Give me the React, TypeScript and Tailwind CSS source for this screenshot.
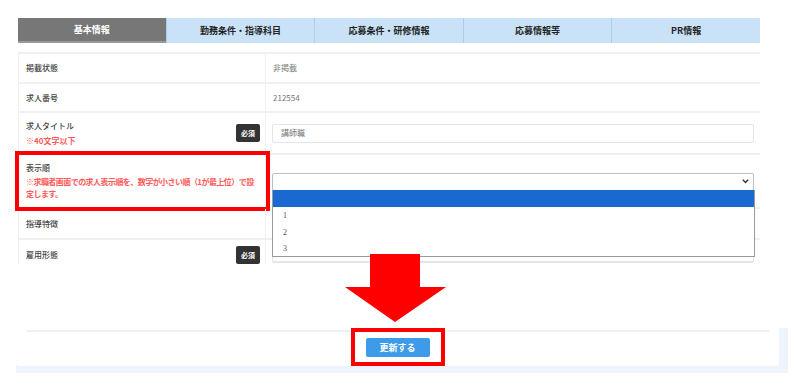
import React from 'react';

const tabs = ['基本情報', '勤務条件・指導科目', '応募条件・研修情報', '応募情報等', 'PR情報'];

const Badge = () => (
  <span className="flex h-[18px] w-[24px] items-center justify-center rounded-[2px] bg-[#333] text-[7px] font-bold text-white">
    必須
  </span>
);

const Chevron = () => (
  <svg width="7" height="5" viewBox="0 0 7 5" className="shrink-0">
    <path d="M0.8 0.8 L3.5 3.6 L6.2 0.8" fill="none" stroke="#333" strokeWidth="1.4" />
  </svg>
);

const App = () => {
  return (
    <div
      className="relative h-[387px] w-[794px] overflow-hidden bg-white text-[8px] text-[#444]"
      style={{ fontFamily: '"Noto Sans CJK JP", "Noto Sans", sans-serif' }}
    >
      <div className="pl-[18px] pt-[18px]">
        {/* tabs */}
        <div className="flex h-[25px] w-[742px]">
          {tabs.map((t, i) => (
            <div
              key={t}
              className={`flex flex-1 items-center justify-center text-[9px] font-bold ${
                i === 0
                  ? 'border-b-2 border-[#999] bg-[#777] text-white'
                  : 'border-l border-[#a8cff0] bg-[#c9e2f8] text-[#222]'
              }`}
            >
              {t}
            </div>
          ))}
        </div>

        {/* table */}
        <div className="relative mt-[9px] w-[742px] border-l border-t-2 border-[#eef0f2]">
          <div className="grid h-[30px] grid-cols-[247px_1fr] border-b-2 border-[#eef0f2]">
            <div className="flex items-center border-r border-[#eef0f2] px-[7px] font-medium">掲載状態</div>
            <div className="flex items-center pl-[7px] text-[#777]">非掲載</div>
          </div>
          <div className="grid h-[29px] grid-cols-[247px_1fr] border-b-2 border-[#eef0f2]">
            <div className="flex items-center border-r border-[#eef0f2] px-[7px] font-medium">求人番号</div>
            <div className="flex items-center pl-[7px] text-[#777]">212554</div>
          </div>
          <div className="grid h-[42px] grid-cols-[247px_1fr] border-b-2 border-[#eef0f2]">
            <div className="flex items-center justify-between border-r border-[#eef0f2] pl-[7px] pr-[5px]">
              <div className="flex flex-col leading-[15px]">
                <span className="font-medium">求人タイトル</span>
                <span className="font-bold text-[#ff5a5a]">※40文字以下</span>
              </div>
              <Badge />
            </div>
            <div className="flex items-center pl-[6px] pr-[6px]">
              <div className="flex h-[19px] w-full items-center rounded-[2px] border border-[#e2e5e9] pl-[8px] text-[#777]">
                講師職
              </div>
            </div>
          </div>
          <div className="grid h-[54px] grid-cols-[247px_1fr] border-b-2 border-[#eef0f2]">
            <div className="flex flex-col justify-center overflow-visible border-r border-[#eef0f2] pl-[7px] pr-0 leading-[12px] outline-[4px] outline-[#ff0000] outline-solid">
              <span className="mb-[2px] font-medium">表示順</span>
              <span className="whitespace-nowrap font-bold tracking-[-0.55px] text-[#ff5a5a]">
                ※求職者画面での求人表示順を、数字が小さい順（1が最上位）で設
              </span>
              <span className="whitespace-nowrap font-bold tracking-[-0.55px] text-[#ff5a5a]">定します。</span>
            </div>
            <div className="flex items-center pl-[6px] pr-[6px] pt-[1px]">
              <div className="flex h-[18px] w-full items-center justify-end rounded-[2px] border border-[#b8c0ca] pr-[4px]">
                <Chevron />
              </div>
            </div>
          </div>
          <div className="grid h-[31px] grid-cols-[247px_1fr] border-b-2 border-[#eef0f2]">
            <div className="flex items-center border-r border-[#eef0f2] px-[7px] font-medium">指導特徴</div>
            <div />
          </div>
          <div className="grid h-[23px] grid-cols-[247px_1fr]">
            <div className="flex items-start justify-between border-r border-[#eef0f2] pl-[7px] pr-[5px] pt-[6px]">
              <span className="mt-[3px] font-medium">雇用形態</span>
              <Badge />
            </div>
            <div className="pl-[6px] pr-[6px] pt-[4px]">
              <div className="h-[19px] w-full rounded-[2px] border border-[#e2e5e9] border-b-2" />
            </div>
          </div>

          {/* open dropdown list */}
          <div
            className="absolute left-[253px] top-[136px] w-[483px] border border-t-0 border-[#999] bg-white text-[8px] text-[#555]"
            style={{ fontFamily: '"Liberation Serif", serif' }}
          >
            <div className="h-[17px] bg-[#1a69d0]" />
            <div className="flex h-[17px] items-center pl-[10px] pt-[1px]">1</div>
            <div className="flex h-[16px] items-center pl-[10px] pt-[2px]">2</div>
            <div className="flex h-[16px] items-center pl-[10px] pt-[2px]">3</div>
          </div>
        </div>
      </div>

      {/* arrow */}
      <div className="flex h-[65px] justify-center pr-[2px]">
        <svg width="102" height="68" viewBox="0 0 102 68" className="relative z-10 -mt-[9px] shrink-0">
          <polygon points="25,0 75,0 75,33 101,33 50,68 0,33 25,33" fill="#ff0000" />
        </svg>
      </div>

      {/* bottom card */}
      <div className="ml-[16px] w-[772px] bg-[#edf4fc] pb-[7px] pr-[9px]">
        <div className="flex flex-col items-center rounded-b-[3px] bg-white">
          <div className="mt-[2px] h-[2px] w-[742px] bg-[#eef0f2]" />
          <div className="-mt-[4px] border-4 border-[#ff0000] px-[11px] pb-[5px] pt-[6px]">
            <button className="flex h-[19px] w-[64px] items-center justify-center rounded-[2px] bg-[#3d9be9] text-[9px] font-bold text-white">
              更新する
            </button>
          </div>
        </div>
      </div>
    </div>
  );
};

export default App;
